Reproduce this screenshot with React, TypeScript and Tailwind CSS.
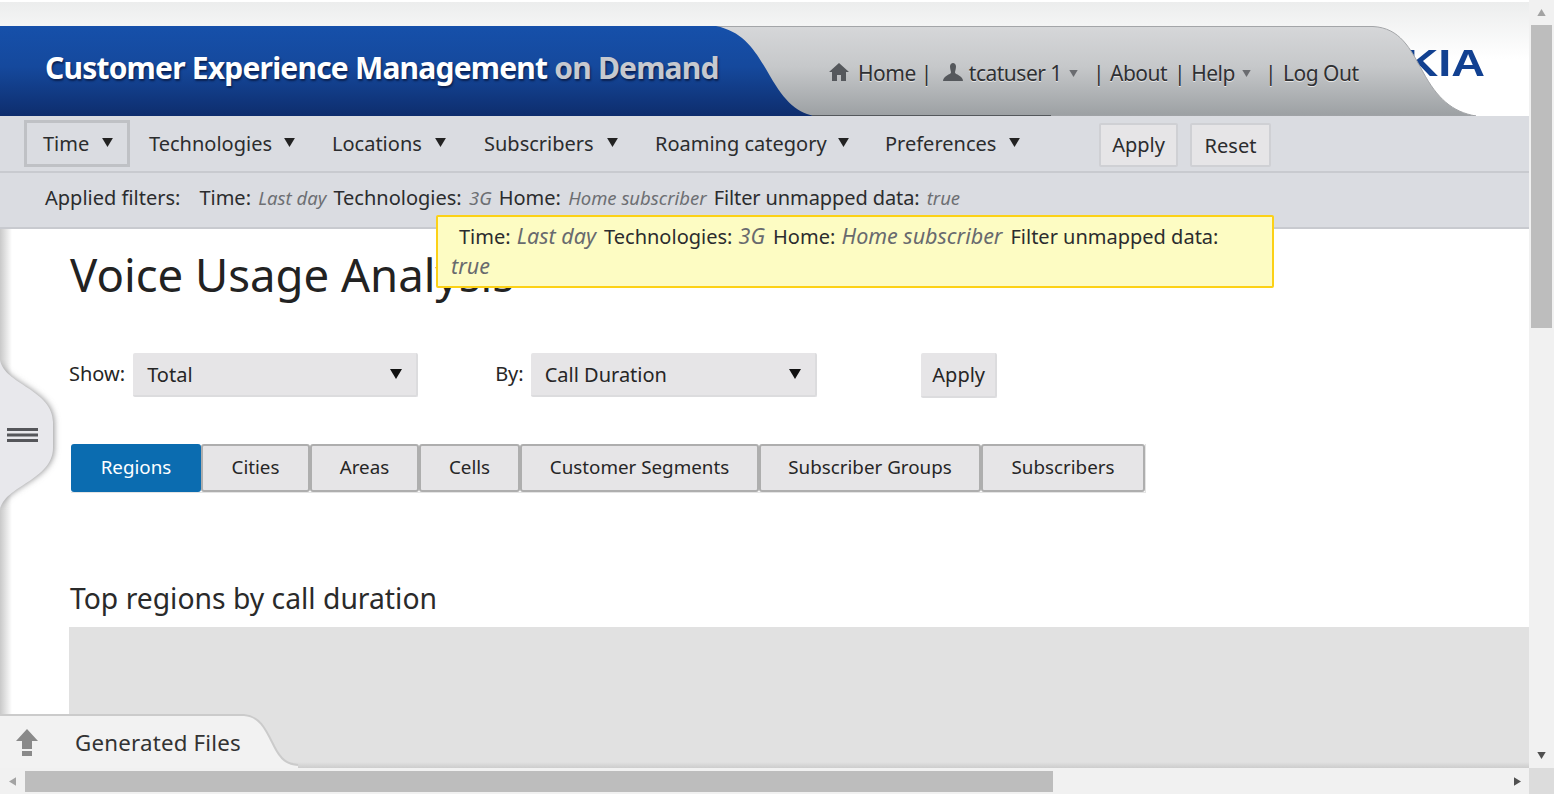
const navItems = [
  { label: 'Technologies', width: 'w-[183px]', gap: 'ml-[12px]' },
  { label: 'Locations', width: 'w-[152px]', gap: 'ml-[13px]' },
  { label: 'Subscribers', width: 'w-[171px]', gap: 'ml-[13px]' },
  { label: 'Roaming category', width: 'w-[230px]', gap: 'ml-[11px]' },
  { label: 'Preferences', width: 'w-[214px]', gap: 'ml-[13px]' },
];

const tabs = [
  { label: 'Cities', width: 'w-[109px]' },
  { label: 'Areas', width: 'w-[109px]' },
  { label: 'Cells', width: 'w-[101px]' },
  { label: 'Customer Segments', width: 'w-[239px]' },
  { label: 'Subscriber Groups', width: 'w-[222px]' },
  { label: 'Subscribers', width: 'w-[164px]' },
];

function Caret({ className }: { className: string }) {
  return (
    <svg viewBox="0 0 12 10" className={className}>
      <path d="M0 0H12L6 10Z" fill="currentColor" />
    </svg>
  );
}

function HeaderShapes() {
  return (
    <svg viewBox="0 0 1529 90" className="absolute inset-0 w-[1529px] h-[90px]">
      <defs>
        <linearGradient id="blue" x1="0" y1="0" x2="0" y2="1">
          <stop offset="0" stopColor="#1650aa" />
          <stop offset="0.45" stopColor="#15499d" />
          <stop offset="1" stopColor="#0e2d6d" />
        </linearGradient>
        <linearGradient id="grey" x1="0" y1="0" x2="0" y2="1">
          <stop offset="0" stopColor="#d6d7d9" />
          <stop offset="0.45" stopColor="#c6c8ca" />
          <stop offset="1" stopColor="#9ca0a3" />
        </linearGradient>
      </defs>
      <path
        d="M700 .5H1373C1400 2 1410 22 1423 46C1437 72 1452 86 1476 90H700Z"
        fill="url(#grey)"
        stroke="#a3a5a8"
      />
      <path d="M0 0H716C745 6 756 26 770 50C785 76 798 88 816 90H0Z" fill="url(#blue)" />
      <path d="M812 89.5H1051" stroke="#54585c" strokeWidth="1" />
    </svg>
  );
}

function HomeIcon() {
  return (
    <svg viewBox="0 0 20 18" className="w-5 h-[18px] -mt-[3px] text-[#55585c]">
      <path d="M10 0L20 9H17V18H12V12H8V18H3V9H0Z" fill="currentColor" />
    </svg>
  );
}

function UserIcon() {
  return (
    <svg viewBox="0 0 20 18" className="w-5 h-[18px] -mt-[3px] text-[#55585c]">
      <path
        d="M7 3.5C7 1.5 8.5 0 10 0S13 1.5 13 3.5C13 6 12 8 12 9.500C12 11.500 20 12.500 20 18H0C0 12.500 8 11.500 8 9.500C8 8 7 6 7 3.500Z"
        fill="currentColor"
      />
    </svg>
  );
}

function FilterText({ compact }: { compact?: boolean }) {
  const value = compact
    ? 'italic text-[#686a6e] text-[21.5px] ml-[1px] mr-[8px]'
    : 'italic text-[#6d6f73] text-[18.5px] ml-[2px] mr-[7px]';
  return (
    <>
      Time: <span className={value}>Last day</span>
      Technologies: <span className={value}>3G</span>
      Home: <span className={value}>Home subscriber</span>
      <span className={compact ? '' : 'tracking-[-.1px]'}>Filter unmapped data: </span>
      <span className={value}>true</span>
    </>
  );
}

function SidebarHandle() {
  return (
    <div className="absolute left-0 top-[131px] w-[64px] h-[150px]">
      <svg viewBox="0 0 64 150" className="w-full h-full">
        <defs>
          <filter id="handleShadow" x="-30%" y="-10%" width="160%" height="120%">
            <feGaussianBlur stdDeviation="3" />
          </filter>
        </defs>
        <path
          d="M0 0C4 24 54 30 54 62V88C54 120 4 126 0 150Z"
          fill="#8e8e90"
          filter="url(#handleShadow)"
        />
        <path d="M0 0C4 24 53 30 53 62V88C53 120 4 126 0 150Z" fill="#e8e8ec" />
        <path d="M7 69.500H38M7 75H38M7 80.500H38" stroke="#55565a" strokeWidth="3" />
      </svg>
    </div>
  );
}

function GeneratedFiles() {
  return (
    <>
      <div className="absolute left-0 right-0 bottom-0 h-[6px] bg-gradient-to-b from-[#e1e1e1] to-[#cdcdcd]" />
      <div className="absolute left-0 bottom-0 w-[310px] h-[54px] flex items-center">
        <svg viewBox="0 0 310 54" className="absolute inset-0 w-full h-full">
          <path d="M0 1H244C260 2 266 16 274 32C281 46 287 50 298 51V54H0Z" fill="#f2f2f2" />
          <path d="M0 1H244C260 2 266 16 274 32C281 46 287 50 298 51" fill="none" stroke="#cbcbcb" strokeWidth="2" />
        </svg>
        <svg viewBox="0 0 24 28" className="relative ml-[15px] mt-[4px] w-6 h-7 text-[#8a8a8a]">
          <path d="M12 0L23 12H17V20H7V12H1ZM7 22H17V27H7Z" fill="currentColor" />
        </svg>
        <span className="relative ml-[36px] mt-[4px] text-[22.3px] text-[#333] tracking-[.2px]">Generated Files</span>
      </div>
    </>
  );
}

export default function App() {
  return (
    <div className="w-[1554px] h-[794px] overflow-hidden flex flex-col bg-white font-['Noto_Sans','Open_Sans',sans-serif] text-[#262626]">
      <div className="flex flex-1 min-h-0">
        <div className="relative w-[1529px] flex flex-col">
          {/* Header */}
          <div className="h-[116px] pt-[26px] bg-gradient-to-b from-[#eceded] to-white to-50% border-t-2 border-white">
            <div className="relative h-[90px] -mt-[2px]">
              <span className="absolute right-[44px] top-[16px] origin-right scale-x-[1.3] font-['Liberation_Sans',sans-serif] font-bold text-[36px] leading-[44px] text-[#124191] blur-[.4px]">
                NOKIA
              </span>
              <HeaderShapes />
              <div className="relative flex items-center h-full">
                <h1 className="pl-[45px] w-[780px] -mt-[6px] text-[30px] leading-9 font-bold tracking-[-.8px] text-white [text-shadow:1px_2px_2px_#0a2050]">
                  Customer Experience Management <span className="text-[#c6c9cf] [text-shadow:1px_2px_2px_#0a2050]">on Demand</span>
                </h1>
                <div className="ml-[49px] flex items-center text-[21px] leading-8 tracking-[-.5px] text-[#2f3033] [text-shadow:0_1px_0_#e6e6e6] pt-[4px]">
                  <HomeIcon />
                  <span className="ml-[9px]">Home</span>
                  <span className="ml-[5px]">|</span>
                  <span className="ml-[11px]"><UserIcon /></span>
                  <span className="ml-[6px]">tcatuser 1</span>
                  <Caret className="ml-[7px] w-[9px] h-[7px] text-[#6a6c70]" />
                  <span className="ml-[15px]">|</span>
                  <span className="ml-[6px]">About</span>
                  <span className="ml-[7px]">|</span>
                  <span className="ml-[6px]">Help</span>
                  <Caret className="ml-[7px] w-[9px] h-[7px] text-[#6a6c70]" />
                  <span className="ml-[14px]">|</span>
                  <span className="ml-[7px]">Log Out</span>
                </div>
              </div>
            </div>
          </div>

          {/* Filter nav */}
          <div className="h-[57px] bg-[#dadce1] border-b-2 border-[#c8cacf] flex items-start text-[20px] text-[#2b2c2e]">
            <div className="mt-[4px] ml-[24px] w-[106px] h-[47px] border-[3px] border-[#bfc1c5] flex items-center pl-[16px]">
              Time
              <Caret className="ml-[13px] w-[11px] h-[9px] -mt-[2px] text-[#222]" />
            </div>
            <div className="flex ml-[19px] w-[950px]">
              {navItems.map((item) => (
                <div key={item.label} className={`${item.width} h-[47px] mt-[4px] shrink-0 flex items-center`}>
                  {item.label}
                  <Caret className={`${item.gap} w-[11px] h-[9px] -mt-[2px] text-[#222]`} />
                </div>
              ))}
            </div>
            <button className="mt-[7px] w-[79px] h-[44px] bg-[#e6e5e7] border-2 border-[#cfd0d4] rounded-[2px]">Apply</button>
            <button className="ml-[12px] mt-[7px] w-[81px] h-[44px] pt-[1px] bg-[#e6e5e7] border-2 border-[#cfd0d4] rounded-[2px]">Reset</button>
          </div>

          {/* Applied filters */}
          <div className="h-[56px] pb-[4px] bg-[#dadce1] border-b-2 border-[#c8cacf] flex items-center pl-[45px] text-[20px] text-[#2b2c2e] whitespace-pre">
            <span className="mr-[19px]">Applied filters:</span>
            <span><FilterText /></span>
          </div>

          {/* Tooltip */}
          <div className="absolute z-20 left-[436px] top-[215px] w-[838px] h-[73px] bg-[#fdfcc3] border-2 border-[#fcd116] rounded-[2px] pl-[12px] pr-[13px] pt-[4px] text-[20px] leading-[29px] text-[#2b2c2e]">
            <span className="ml-[9px]" /><FilterText compact />
          </div>

          {/* Page body */}
          <div className="relative flex-1 min-h-0 overflow-hidden pl-[70px] bg-gradient-to-r from-[#c9c9c9] via-white via-[12px] to-white">
            <h1 className="mt-[14px] text-[45.5px] leading-[62px] text-[#222]">Voice Usage Analysis</h1>
            <div className="flex items-start mt-[48px] -ml-px text-[20px]">
              <span className="leading-[42px]">Show:</span>
              <div className="ml-[8px] w-[285px] h-[44px] pl-[14px] pr-[14px] pt-[2px] bg-[#e6e5e7] border-b-2 border-r-2 border-[#dcdcde] rounded-[2px] flex items-center justify-between">
                Total
                <Caret className="w-3 h-[10px] -mt-[2px] text-[#111]" />
              </div>
              <span className="ml-[77px] leading-[42px]">By:</span>
              <div className="ml-[7px] w-[286px] h-[44px] pl-[14px] pr-[14px] pt-[2px] bg-[#e6e5e7] border-b-2 border-r-2 border-[#dcdcde] rounded-[2px] flex items-center justify-between">
                Call Duration
                <Caret className="w-3 h-[10px] -mt-[2px] text-[#111]" />
              </div>
              <button className="ml-[104px] w-[76px] h-[45px] pl-[2px] bg-[#e6e5e7] border-b-2 border-r-2 border-[#dcdcde] rounded-[2px]">Apply</button>
            </div>
            <div className="flex mt-[46px] ml-px h-[49px] text-[18.8px] border-b border-r border-[#e4e4e4] w-[1075px]">
              <div className="w-[130px] h-full pb-[2px] bg-[#0b6cb0] text-white rounded-[3px] flex items-center justify-center">Regions</div>
              {tabs.map((tab) => (
                <div key={tab.label} className={`${tab.width} h-full pb-[2px] bg-[#e6e5e7] border-2 border-[#aeaeae] rounded-[3px] flex items-center justify-center`}>
                  {tab.label}
                </div>
              ))}
            </div>
            <h2 className="mt-[83px] text-[28.3px] leading-[44px] text-[#2a2a2a]">Top regions by call duration</h2>
            <div className="-ml-px mt-[7px] h-[200px] bg-[#e1e1e1]" />
            <SidebarHandle />
          </div>
          <GeneratedFiles />
        </div>

        {/* Vertical scrollbar */}
        <div className="w-[25px] bg-[#f1f1f1] flex flex-col items-center">
          <div className="h-[25px] flex items-center justify-center">
            <Caret className="w-[11px] h-[7px] rotate-180 text-[#a3a3a3]" />
          </div>
          <div className="w-[21px] h-[303px] bg-[#bdbdbd]" />
          <div className="flex-1" />
          <div className="h-[25px] flex items-center justify-center">
            <Caret className="w-[11px] h-[7px] text-[#505050]" />
          </div>
        </div>
      </div>

      {/* Horizontal scrollbar */}
      <div className="h-[26px] flex items-center bg-[#f1f1f1]">
        <div className="w-[25px] flex justify-center">
          <Caret className="w-[11px] h-[7px] rotate-90 text-[#a3a3a3]" />
        </div>
        <div className="w-[1028px] h-[21px] bg-[#bdbdbd]" />
        <div className="w-[476px] flex justify-end pr-[6px]">
          <Caret className="w-[11px] h-[7px] -rotate-90 text-[#505050]" />
        </div>
        <div className="w-[25px] h-full bg-[#dcdcdc]" />
      </div>
    </div>
  );
}
